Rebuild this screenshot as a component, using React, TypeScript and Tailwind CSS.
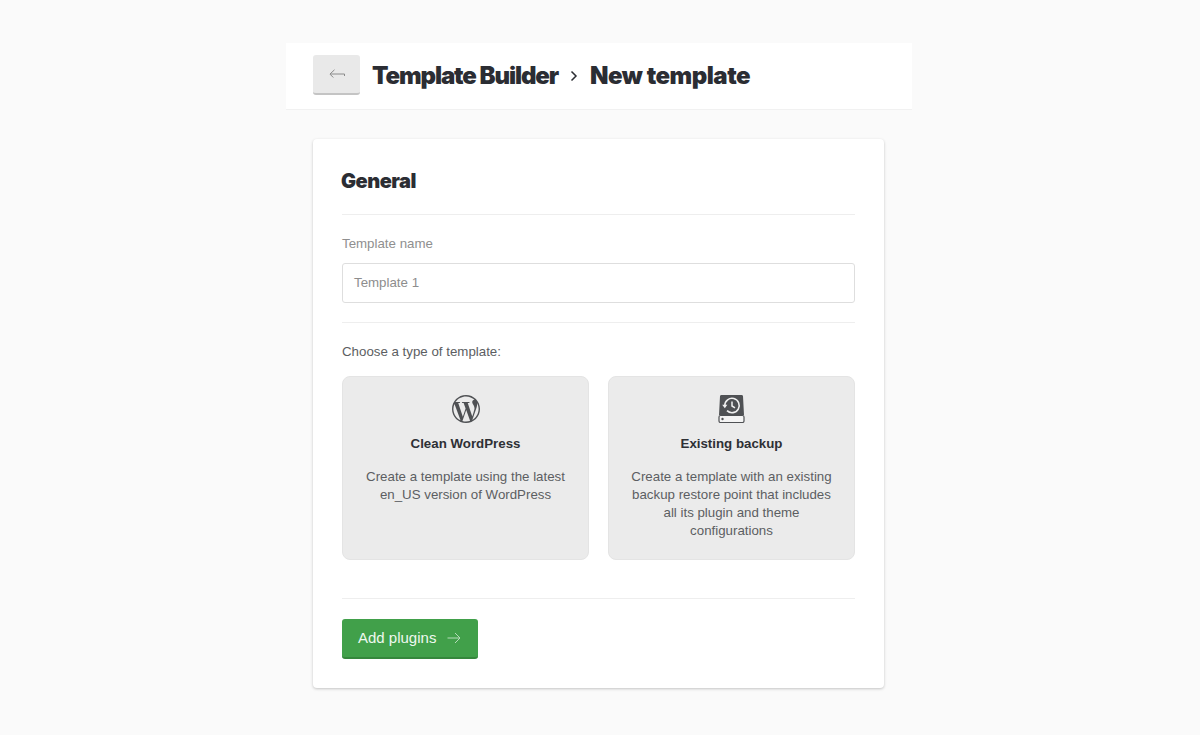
import React from 'react';
import { SiWordpress } from 'react-icons/si';

const headingFont = "font-['Inter',sans-serif] font-black text-[#2b2d33]";

function ArrowLeft() {
  return (
    <svg width="16" height="11" viewBox="0 0 16 11" fill="none" stroke="#8a8a8a" strokeWidth="1">
      <path d="M5.500 .8 1 5H15.500V7" />
      <path d="M1 5.200 4.300 8.500" />
    </svg>
  );
}

function ArrowRight() {
  return (
    <svg width="14" height="12" viewBox="0 0 14 12" fill="none" stroke="#b5dcb9" strokeWidth="1">
      <path d="M.5 6H13M8 1l5 5-5 5" />
    </svg>
  );
}

function BackupIcon() {
  return (
    <svg width="27" height="28" viewBox="0 0 27 28">
      <path d="M3.500 0h20a1.500 1.500 0 0 1 1.500 1.300L26 20H1L2 1.300A1.500 1.500 0 0 1 3.500 0Z" fill="#4f5154" />
      <rect x="1" y="20.500" width="25" height="7" rx="1.500" fill="#f4f4f4" stroke="#4f5154" strokeWidth="1.200" />
      <circle cx="4.500" cy="24" r="1.200" fill="#4f5154" />
      <path d="M6.800 10.500a7.200 7.200 0 1 1 2.200 5.200" fill="none" stroke="#f0f0f0" strokeWidth="1.600" />
      <path d="M4.200 9.800h5.200L6.800 13.200Z" fill="#f0f0f0" />
      <path d="M14 6.500v4.500l3 1.800" fill="none" stroke="#f0f0f0" strokeWidth="1.500" />
    </svg>
  );
}

function TypeCard({ icon, title, text }: { icon: React.ReactNode; title: string; text: string[] }) {
  return (
    <div className="h-[184px] flex-1 rounded-lg border border-[#e4e4e4] bg-[#ebebeb] pt-[18px] text-center">
      <div className="flex h-[28px] justify-center">{icon}</div>
      <div className="mt-[12px] text-[13.3px] leading-[18px] font-bold text-[#2e3035]">{title}</div>
      <div className="mt-[15px] text-[13.3px] leading-[18px] text-[#5c5e62]">
        {text.map(line => <div key={line}>{line}</div>)}
      </div>
    </div>
  );
}

export default function App() {
  return (
    <div className="h-[735px] overflow-hidden bg-[#fafafa] pt-[43px] font-['Liberation_Sans',sans-serif]">
      <div className="ml-[286px] w-[626px]">
        {/* Header */}
        <div className="flex h-[67px] items-center border-b border-[#f1f1f1] bg-white pl-[27px]">
          <button className="-mt-[2px] flex h-[40px] w-[47px] items-center justify-center rounded-[3px] border-b-2 border-[#c4c4c4] bg-[#e9e9e9]">
            <ArrowLeft />
          </button>
          <h1 className={`ml-[12px] flex items-center text-[24px] leading-none ${headingFont}`}>
            <span className="tracking-[-1.1px]">Template Builder</span>
            <svg className="mx-[11px]" width="10" height="12" viewBox="0 0 10 12" fill="none" stroke="#2b2d33" strokeWidth="1.500">
              <path d="M2.500 1.500 7 6l-4.500 4.500" />
            </svg>
            <span className="tracking-[-0.5px]">New template</span>
          </h1>
        </div>

        {/* Card */}
        <div className="mt-[29px] ml-[27px] h-[549px] w-[571px] rounded-[4px] bg-white px-[29px] shadow-[0_1px_3px_rgba(0,0,0,0.22)]">
          <h2 className={`flex h-[75px] -ml-px items-center pt-[9px] text-[20px] leading-none tracking-[-0.5px] ${headingFont}`}>General</h2>
          <div className="h-px bg-[#eeeeee]" />
          <label className="mt-[20px] block text-[13.3px] leading-[18px] text-[#8f8f8f]">Template name</label>
          <div className="mt-[10px] flex h-[40px] items-center rounded-[3px] border border-[#dedede] bg-white px-[11px] text-[13.3px] text-[#8d8d8d]">
            Template 1
          </div>
          <div className="mt-[19px] h-px bg-[#eeeeee]" />
          <div className="mt-[20px] text-[13.3px] leading-[18px] text-[#5c5e62]">Choose a type of template:</div>
          <div className="mt-[15px] flex gap-[19px]">
            <TypeCard
              icon={<SiWordpress size={28} color="#4f5154" />}
              title="Clean WordPress"
              text={['Create a template using the latest', 'en_US version of WordPress']}
            />
            <TypeCard
              icon={<BackupIcon />}
              title="Existing backup"
              text={['Create a template with an existing', 'backup restore point that includes', 'all its plugin and theme', 'configurations']}
            />
          </div>
          <div className="mt-[38px] h-px bg-[#eeeeee]" />
          <button className="mt-[20px] flex h-[40px] w-[136px] items-center rounded-[3px] border-b-2 border-[#35873c] bg-[#41a04a] pl-[16px] text-[15px] text-[#eef8ef]">
            Add plugins
            <span className="ml-[11px] flex"><ArrowRight /></span>
          </button>
        </div>
      </div>
    </div>
  );
}
